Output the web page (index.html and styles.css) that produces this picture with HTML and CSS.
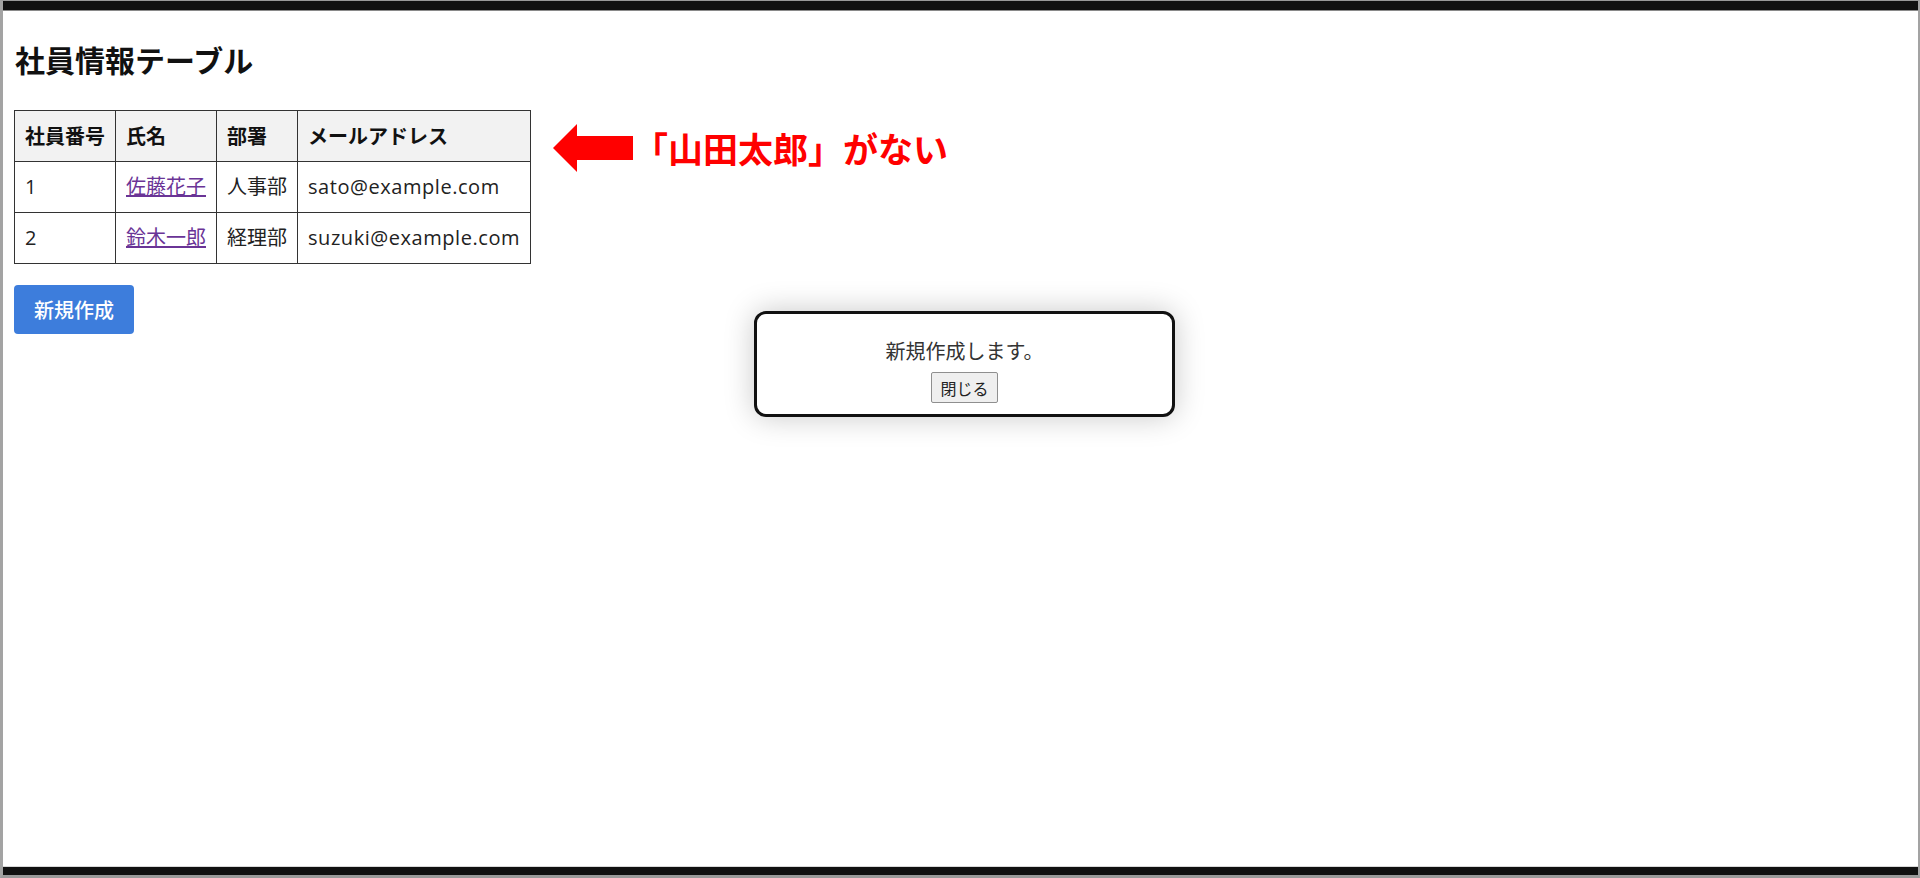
FILE: index.html
```html
<!DOCTYPE html>
<html lang="ja">
<head>
    <meta charset="UTF-8">
    <meta name="viewport" content="width=device-width, initial-scale=1.0">
    <title>社員情報テーブル</title>
    <link rel="stylesheet" href="styles.css">
</head>
<body>
    <div class="frame">
        <div class="topbar"></div>
        <div class="content">
            <h1 class="title">社員情報テーブル</h1>
            <table class="staff-table">
                <thead>
                    <tr>
                        <th>社員番号</th>
                        <th>氏名</th>
                        <th>部署</th>
                        <th>メールアドレス</th>
                    </tr>
                </thead>
                <tbody>
                    <tr>
                        <td>1</td>
                        <td><a href="#">佐藤花子</a></td>
                        <td>人事部</td>
                        <td class="mail">sato@example.com</td>
                    </tr>
                    <tr>
                        <td>2</td>
                        <td><a href="#">鈴木一郎</a></td>
                        <td>経理部</td>
                        <td class="mail">suzuki@example.com</td>
                    </tr>
                </tbody>
            </table>
            <button class="btn-create">新規作成</button>

            <!-- annotation -->
            <div class="note">
                <svg class="note-arrow" width="80" height="48" viewBox="0 0 80 48">
                    <polygon points="0,24 24,0 24,12 80,12 80,36 24,36 24,48" fill="#ff0000"/>
                </svg>
                <span class="note-text">「山田太郎」がない</span>
            </div>

            <div class="modal">
                <p class="modal-msg">新規作成します。</p>
                <button class="modal-close">閉じる</button>
            </div>
        </div>
        <div class="bottombar"></div>
    </div>
</body>
</html>
```

FILE: styles.css
```css
html, body {
    margin: 0;
    height: 100%;
}
body {
    background-color: #a3a3a3;
    font-family: "Open Sans", "Noto Sans CJK JP", sans-serif;
    color: #222;
}
.frame {
    display: flex;
    flex-direction: column;
    height: 100vh;
    box-sizing: border-box;
    border-top: 1px solid #999;
    border-left: 3px solid #a3a3a3;
    border-right: 2px solid #a3a3a3;
    border-bottom: 3px solid #9a9a9a;
}
.topbar {
    height: 9px;
    background-color: #111;
    border-bottom: 1px solid #8a8a8a;
}
.bottombar {
    height: 8px;
    background-color: #111;
    border-top: 1px solid #d8d8d8;
}
.content {
    position: relative;
    flex: 1;
    background-color: #fff;
    padding: 0 10px 0 11px;
}
.title {
    margin: 28px 0 31px 1px;
    font-family: "Noto Sans CJK JP", sans-serif;
    font-size: 30px;
    line-height: 40px;
    font-weight: bold;
    color: #111;
}
.staff-table {
    border-collapse: collapse;
    font-size: 20px;
    line-height: 30px;
}
.staff-table th,
.staff-table td {
    border: 1px solid #333;
    padding: 10px 10px;
    text-align: left;
    white-space: nowrap;
}
.staff-table th {
    background-color: #f2f2f2;
    font-family: "Noto Sans CJK JP", sans-serif;
    font-weight: bold;
    color: #111;
}
.staff-table td.mail {
    letter-spacing: 0.55px;
}
.staff-table a {
    color: #6a3496;
}
.btn-create {
    display: block;
    margin-top: 21px;
    padding: 10px 20px;
    font-family: "Noto Sans CJK JP", sans-serif;
    font-size: 20px;
    line-height: 29px;
    font-weight: 500;
    color: #fff;
    background-color: #3d7ddc;
    border: none;
    border-radius: 4px;
    cursor: pointer;
}
.note {
    position: absolute;
    left: 550px;
    top: 113px;
    display: flex;
    align-items: center;
    gap: 0;
}
.note-arrow {
    display: block;
}
.note-text {
    font-family: "Noto Sans CJK JP", sans-serif;
    font-size: 35px;
    line-height: 48px;
    font-weight: bold;
    color: #ff0000;
}
.modal {
    position: absolute;
    left: 751px;
    top: 300px;
    width: 421px;
    height: 106px;
    box-sizing: border-box;
    padding: 23px 20px 10px;
    border: 3px solid #111;
    border-radius: 12px;
    background-color: #fff;
    box-shadow: 0 0 30px rgba(0, 0, 0, 0.22);
    text-align: center;
}
.modal-msg {
    margin: 0 0 7px;
    font-family: "Noto Sans CJK JP", sans-serif;
    font-size: 20px;
    line-height: 28px;
    color: #333;
}
.modal-close {
    height: 31px;
    padding: 0 8px;
    font-family: "Noto Sans CJK JP", sans-serif;
    font-size: 16px;
    color: #222;
    background-color: #efefef;
    border: 1px solid #8f8f8f;
    border-radius: 2px;
}
```
